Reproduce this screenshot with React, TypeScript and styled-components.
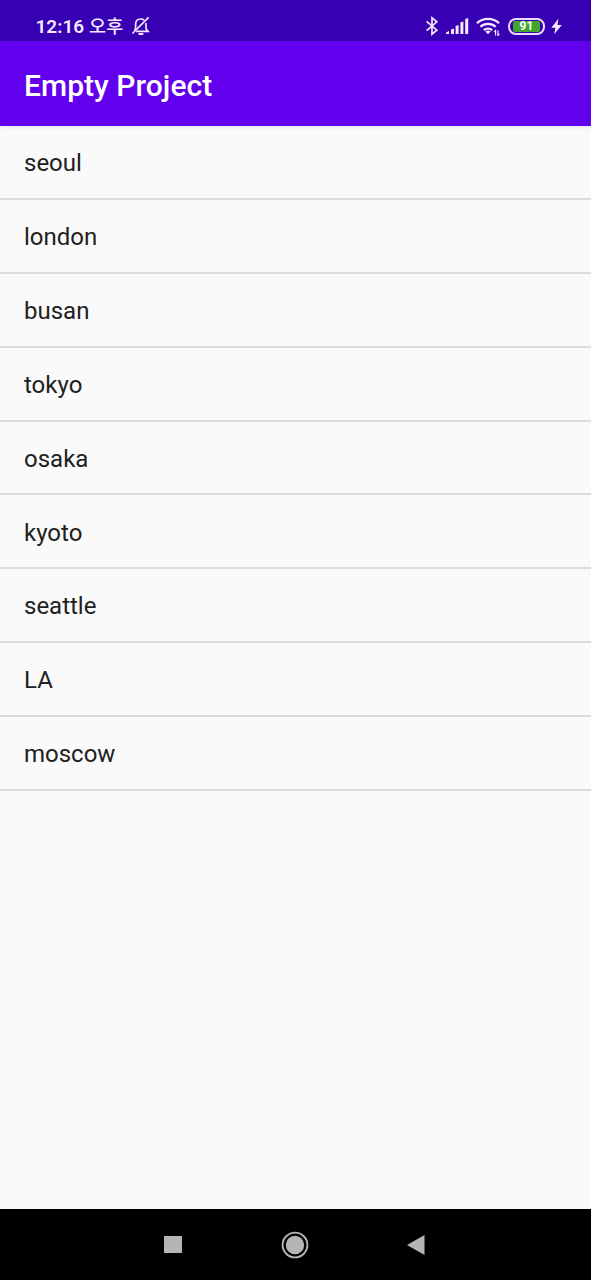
import React from "react";
import styled, { createGlobalStyle } from "styled-components";

const GlobalStyle = createGlobalStyle`
  * { box-sizing: border-box; }
  body { margin: 0; background: #fafafa; font-family: Roboto, "Noto Sans CJK KR", sans-serif; }
`;

const Screen = styled.div`
  display: flex;
  flex-direction: column;
  width: 100%;
  height: 1280px;
  overflow: hidden;
  background: #fafafa;
`;

const StatusBar = styled.header`
  display: flex;
  align-items: center;
  justify-content: space-between;
  height: 41px;
  padding: 11px 29px 0 35.5px;
  background: #3700b3;
  color: #f4e9ff;
  flex: none;
`;

const StatusGroup = styled.div`
  display: flex;
  align-items: center;
  height: 30px;
  svg { display: block; flex: none; }
`;

const Clock = styled.span`
  padding-top: 1px;
  font-size: 19px;
  font-weight: 600;
  line-height: 29px;
  white-space: nowrap;
`;

const Meridiem = styled.span`
  margin: 0 8px 2px 5px;
  font-family: "Noto Sans CJK KR", sans-serif;
  font-size: 18.5px;
  font-weight: 500;
  line-height: 28px;
  white-space: nowrap;
`;

const Battery = styled.div`
  display: flex;
  width: 37px;
  height: 17px;
  margin: 0 6px 0 8px;
  padding: 1px 3px;
  border: 2px solid #eadcff;
  border-radius: 8px;
`;

const Charge = styled.div`
  display: flex;
  align-items: center;
  justify-content: center;
  flex: 1;
  padding-top: 1px;
  border-radius: 2px;
  background: #43a62c;
  color: #fff;
  font-size: 12px;
  font-weight: 700;
  line-height: 11px;
`;

const AppBar = styled.div`
  display: flex;
  align-items: center;
  height: 85px;
  padding: 4px 24px 0;
  background: #6200ee;
  box-shadow: 0 1px 4px rgba(0, 0, 0, 0.1);
  flex: none;
  z-index: 1;
`;

const Title = styled.h1`
  margin: 0;
  color: #fff;
  font-size: 30px;
  font-weight: 500;
  line-height: 36px;
  letter-spacing: 0.04px;
`;

const List = styled.ul`
  flex: 1;
  margin: 0;
  padding: 0;
  list-style: none;
`;

const Row = styled.li`
  display: flex;
  align-items: center;
  height: 73.875px;
  padding: 2.5px 24px 0;
  border-bottom: 2px solid #dcdcdc;
  color: #212121;
  font-size: 24px;
  line-height: 28px;
`;

const NavBar = styled.nav`
  display: flex;
  align-items: center;
  justify-content: space-between;
  height: 71px;
  padding: 0 165px 0 163px;
  background: #000;
  flex: none;
  svg { display: block; }
`;

const cities = ["seoul", "london", "busan", "tokyo", "osaka", "kyoto", "seattle", "LA", "moscow"];

const BellOff = () => (
  <svg width="20" height="20" viewBox="0 0 20 20" fill="none" stroke="currentColor" strokeWidth="1.7">
    <path d="M4.6 12.8V8.2C4.6 5 6.8 3 9.8 3c1.3 0 2.4.4 3.3 1M15 7v5.8l2 2.5H5.2M4.6 12.8l-1.2 1.5" />
    <path d="M1.4 17.5 17.6 1.4" />
    <path d="M7.5 18h4.8" strokeWidth="2" />
  </svg>
);

const Bluetooth = () => (
  <svg width="14" height="20" viewBox="0 0 14 20" fill="none" stroke="currentColor" strokeWidth="1.7">
    <path d="m1.6 5.4 10.2 8.8L7 18.2V1.8l4.8 4L1.6 14.6" />
  </svg>
);

const SignalIcon = styled.svg`
  margin-left: 7px;
`;

const Signal = () => (
  <SignalIcon width="23" height="18" viewBox="0 0 23 18" fill="currentColor">
    <path d="M0 15.5 3 14v3H0zM5 12.5l3-1V17H5zM9.6 9l3-1v9h-3zM14.4 5.5l3-1V17h-3zM19.2 2l3-1v16h-3z" />
  </SignalIcon>
);

const WifiIcon = styled.svg`
  margin-left: 7px;
`;

const Wifi = () => (
  <WifiIcon width="24" height="20" viewBox="0 0 24 20" fill="none" stroke="currentColor" strokeWidth="2.2">
    <path d="M1 7.3c6.2-5.8 15.8-5.8 22 0M4.3 10.8c4.4-4 11-4 15.4 0M7.8 14.1c2.4-2.1 6-2.1 8.4 0" />
    <path d="m9.4 15.5 2.6 2.8 2.6-2.8c-1.5-1.2-3.7-1.2-5.2 0z" fill="currentColor" stroke="none" />
    <path d="M19.6 19.5V14.5l-1.4 1.6M22 14.5v5l1.4-1.6" strokeWidth="1.2" />
  </WifiIcon>
);

const Bolt = () => (
  <svg width="11" height="17" viewBox="0 0 11 17" fill="currentColor">
    <path d="M7.4.8.3 9.7h4.1L3.2 16.2 10.8 7H6.5z" />
  </svg>
);

export default function App() {
  return (
    <Screen>
      <GlobalStyle />
      <StatusBar>
        <StatusGroup>
          <Clock>12:16</Clock>
          <Meridiem>오후</Meridiem>
          <BellOff />
        </StatusGroup>
        <StatusGroup>
          <Bluetooth />
          <Signal />
          <Wifi />
          <Battery><Charge>91</Charge></Battery>
          <Bolt />
        </StatusGroup>
      </StatusBar>
      <AppBar><Title>Empty Project</Title></AppBar>
      <List>
        {cities.map((city) => <Row key={city}>{city}</Row>)}
      </List>
      <NavBar>
        <svg width="20" height="20" viewBox="0 0 20 20"><path d="M1 1h18v17H1z" fill="#b5b5b5" /></svg>
        <svg width="28" height="28" viewBox="0 0 28 28" fill="#b5b5b5">
          <circle cx="14" cy="14" r="12.4" fill="none" stroke="#b5b5b5" strokeWidth="1.9" />
          <circle cx="14" cy="14" r="9.2" />
        </svg>
        <svg width="20" height="22" viewBox="0 0 20 22"><path d="M1 11 18.5 1v20z" fill="#b5b5b5" /></svg>
      </NavBar>
    </Screen>
  );
}
